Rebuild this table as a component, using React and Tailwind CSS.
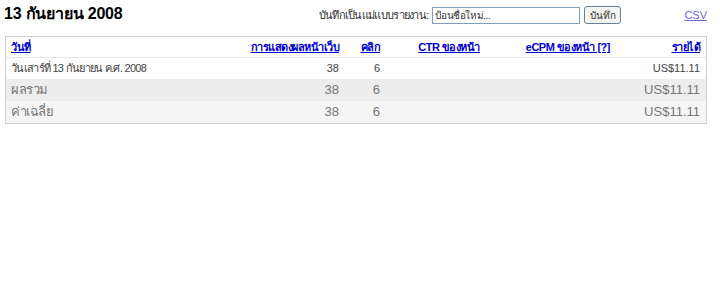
const HEAD = [
  { label: 'วันที่', align: 'text-left pl-[5px]' },
  { label: 'การแสดงผลหน้าเว็บ', align: 'text-right pr-[6px]' },
  { label: 'คลิก', align: 'text-right pr-[6px]' },
  { label: 'CTR ของหน้า', align: 'text-right pr-[6px]' },
  { label: 'eCPM ของหน้า [?]', align: 'text-right pr-[6px]' },
  { label: 'รายได้', align: 'text-right pr-[6px]' },
];

const ROWS = [
  { date: 'วันเสาร์ที่ 13 กันยายน ค.ศ. 2008', views: '38', clicks: '6', rev: 'US$11.11', cls: 'h-[21px] bg-white text-[11px] text-[#444]', dateCls: 'tracking-[-0.7px]' },
  { date: 'ผลรวม', views: '38', clicks: '6', rev: 'US$11.11', cls: 'h-[22px] bg-[#ededed] text-[13px] text-[#777]', dateCls: 'tracking-[-0.4px]' },
  { date: 'ค่าเฉลี่ย', views: '38', clicks: '6', rev: 'US$11.11', cls: 'h-[22px] bg-[#f5f5f5] text-[13px] text-[#777]', dateCls: 'tracking-[-0.4px]' },
];

const GRID = 'grid grid-cols-[234px_105px_41px_100px_130px_90px]';

export default function App() {
  return (
    <div className="w-[720px] h-[286px] bg-white font-['Liberation_Sans',Tahoma,sans-serif]">
      <div className="flex items-start pl-[4px] pt-[4px] pr-[13px]">
        <h1 className="text-[16px] font-bold text-black leading-[20px] tracking-[-0.2px]">13 กันยายน 2008</h1>
        <div className="ml-auto flex items-center pt-[2px]">
          <span className="text-[11px] text-[#333] tracking-[-0.7px]">บันทึกเป็นแม่แบบรายงาน:</span>
          <input
            className="ml-[4px] w-[148px] h-[17px] border border-[#7f9db9] px-[2px] text-[10px] text-[#333] tracking-[-0.4px] outline-none"
            defaultValue="ป้อนชื่อใหม่..."
          />
          <button className="ml-[4px] w-[37px] h-[18px] rounded-[3px] border border-[#6b7f93] bg-[#f4f4f0] text-[10px] text-[#333]">
            บันทึก
          </button>
          <a href="#" className="ml-[63px] text-[11px] text-[#6b6bcf] underline">CSV</a>
        </div>
      </div>

      <div className="ml-[5px] mt-[12px] w-[702px] border border-[#cfcfcf]">
        <div className={`${GRID} h-[21px] items-center border-b border-[#e4e4e4] text-[11px] font-bold tracking-[-0.5px]`}>
          {HEAD.map((h) => (
            <a key={h.label} href="#" className={`${h.align} text-[#0000cc] underline`}>{h.label}</a>
          ))}
        </div>
        {ROWS.map((r) => (
          <div key={r.date} className={`${GRID} items-center ${r.cls}`}>
            <span className={`pl-[5px] ${r.dateCls}`}>{r.date}</span>
            <span className="text-right pr-[6px]">{r.views}</span>
            <span className="text-right pr-[6px]">{r.clicks}</span>
            <span />
            <span />
            <span className="text-right pr-[6px]">{r.rev}</span>
          </div>
        ))}
      </div>
    </div>
  );
}
